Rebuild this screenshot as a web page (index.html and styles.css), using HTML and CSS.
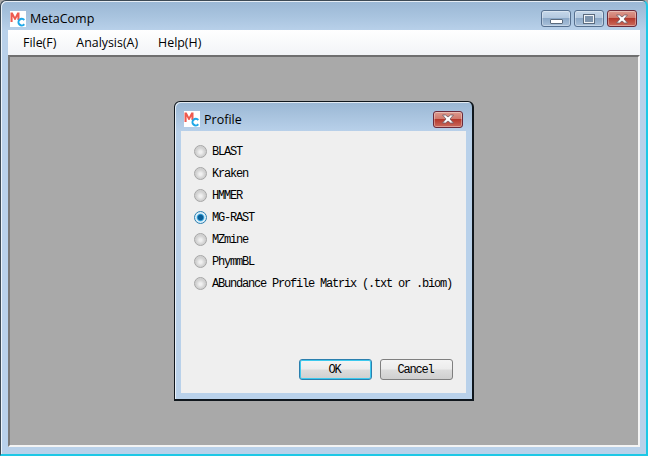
FILE: index.html
```html
<!DOCTYPE html>
<html lang="en">
<head>
<meta charset="utf-8">
<title>MetaComp</title>
<link rel="stylesheet" href="styles.css">
</head>
<body>
<div class="window">
  <header class="titlebar">
    <svg class="app-icon" width="16" height="16" viewBox="0 0 16 16"><rect width="16" height="16" fill="#fff"/><path d="M.5 11V1.500h2.200L5 6l2.300-4.500h2.200V9H7.400V5.500L5.500 9h-1L2.600 5.500V11z" fill="#ee5a50"/><path d="M15 8.300A4.300 4.300 0 1 0 15 14l-1.300-1.500a2.300 2.300 0 1 1 0-2.700z" fill="#1fa8e8"/></svg>
    <span class="title">MetaComp</span>
    <div class="controls">
      <div class="ctl ctl-min"><i class="glyph-min"></i></div>
      <div class="ctl ctl-max"><i class="glyph-max"></i></div>
      <div class="ctl ctl-close"><svg width="14" height="10" viewBox="0 0 14 10"><path d="M1.500 1h3L7 3l2.500-2h3L9 5l3.500 4h-3L7 7 4.500 9h-3L5 5z" fill="#fff" stroke="#6d5a64" stroke-width=".8"/></svg></div>
    </div>
  </header>
  <nav class="menubar">
    <span class="menu-item">File(F)</span>
    <span class="menu-item">Analysis(A)</span>
    <span class="menu-item">Help(H)</span>
  </nav>
  <main class="desktop"></main>
</div>
<section class="dialog">
  <header class="dialog-title">
    <svg class="app-icon" width="16" height="16" viewBox="0 0 16 16"><rect width="16" height="16" fill="#fff"/><path d="M.5 11V1.500h2.200L5 6l2.300-4.500h2.200V9H7.400V5.500L5.500 9h-1L2.600 5.500V11z" fill="#ee5a50"/><path d="M15 8.300A4.300 4.300 0 1 0 15 14l-1.300-1.500a2.300 2.300 0 1 1 0-2.700z" fill="#1fa8e8"/></svg>
    <span class="title">Profile</span>
    <div class="ctl ctl-close dialog-close"><svg width="14" height="10" viewBox="0 0 14 10"><path d="M1.500 1h3L7 3l2.500-2h3L9 5l3.500 4h-3L7 7 4.500 9h-3L5 5z" fill="#fff" stroke="#6d5a64" stroke-width=".8"/></svg></div>
  </header>
  <div class="dialog-body">
    <div class="radios">
      <div class="radio-row"><i class="radio"></i>BLAST</div>
      <div class="radio-row"><i class="radio"></i>Kraken</div>
      <div class="radio-row"><i class="radio"></i>HMMER</div>
      <div class="radio-row"><i class="radio on"></i>MG-RAST</div>
      <div class="radio-row"><i class="radio"></i>MZmine</div>
      <div class="radio-row"><i class="radio"></i>PhymmBL</div>
      <div class="radio-row"><i class="radio"></i>ABundance Profile Matrix (.txt or .biom)</div>
    </div>
    <div class="buttons">
      <div class="btn btn-default">OK</div>
      <div class="btn">Cancel</div>
    </div>
  </div>
</section>
</body>
</html>
```
FILE: styles.css
```css
* { box-sizing: border-box; }
html, body { margin: 0; height: 100%; }
body {
  width: 648px;
  height: 456px;
  overflow: hidden;
  background: #a9a9a9;
  font-family: "Open Sans", "Noto Sans", sans-serif;
  color: #000;
  position: relative;
}
.window {
  width: 648px;
  height: 456px;
  display: flex;
  flex-direction: column;
  padding: 0 6px 7px 7px;
  border-style: solid;
  border-width: 1px 2px 2px 1px;
  border-color: #3d4a55 #1ec8e6 #1ec8e6 #3d4a55;
  border-radius: 6px 6px 0 0;
  background: linear-gradient(to bottom, #9ab7d4 0, #a9c4df 16px, #b9d1ea 30px, #b9d1ea 100%);
  box-shadow: inset 1px 1px 0 rgba(255,255,255,.75);
}
.titlebar {
  height: 29px;
  flex: none;
  display: flex;
  align-items: center;
  padding: 6px 0 0 2px;
}
.app-icon { flex: none; display: block; }
.title { font-size: 12.500px; margin-left: 4px; }
.controls { margin-left: auto; display: flex; gap: 3px; padding-right: 3px; }
.ctl {
  height: 17px;
  width: 30px;
  border: 1px solid #56708f;
  border-radius: 3px;
  display: flex;
  align-items: center;
  justify-content: center;
  background: linear-gradient(to bottom, #c6d8ea 0, #b4c9df 45%, #8ca9c8 50%, #a9c1da 100%);
  box-shadow: inset 0 0 0 1px rgba(255,255,255,.35);
}
.ctl-close {
  border-color: #6a2a3a;
  background: linear-gradient(to bottom, #dc9a8e 0, #d0796c 45%, #b5392c 50%, #cb6a5c 100%);
}
.glyph-min {
  display: block;
  width: 13px;
  height: 5px;
  margin-top: 5px;
  border: 1px solid #5b6b7d;
  background: #fff;
  border-radius: 1px;
}
.glyph-max {
  display: block;
  width: 12px;
  height: 10px;
  border: 2px solid #f2f5f8;
  outline: 1px solid #5b6b7d;
  outline-offset: -1px;
  background: #7d94ad;
}
.menubar {
  height: 25px;
  flex: none;
  display: flex;
  align-items: center;
  gap: 20px;
  padding-left: 15px;
  background: linear-gradient(to bottom, #fff, #f2f4f7);
  font-size: 12.400px;
}
.desktop {
  flex: 1;
  background: #a9a9a9;
  border-top: 2px solid #6f6f6f;
  border-left: 2px solid #7a7a7a;
  border-right: 2px solid #f4f4f4;
  border-bottom: 2px solid #f4f4f4;
  background-clip: padding-box;
}
.dialog {
  position: absolute;
  left: 174px;
  top: 101px;
  width: 300px;
  height: 300px;
  display: flex;
  flex-direction: column;
  border-style: solid;
  border-color: #10171d;
  border-width: 1px 2px 2px 1px;
  border-radius: 6px 6px 0 0;
  background: linear-gradient(to bottom, #9ab7d4 0, #b9d1ea 30px);
  padding: 0 6px 6px;
  box-shadow: inset 1px 1px 0 rgba(255,255,255,.7);
}
.dialog-title {
  height: 29px;
  flex: none;
  display: flex;
  align-items: center;
  padding: 5px 0 0 3px;
}
.dialog-close { margin-left: auto; margin-right: 3px; }
.dialog-body {
  flex: 1;
  background: #efefef;
  display: flex;
  flex-direction: column;
  justify-content: space-between;
  padding: 10px 13px 13px 13px;
  font-family: "Liberation Mono", monospace;
  font-size: 12px;
  letter-spacing: -1.200px;
  white-space: nowrap;
}
.radios { display: flex; flex-direction: column; }
.radio-row {
  height: 22px;
  display: flex;
  align-items: center;
  gap: 5px;
}
.radio {
  width: 13px;
  height: 13px;
  margin-bottom: 2px;
  flex: none;
  border-radius: 50%;
  border: 1px solid #a6a6a6;
  background: radial-gradient(circle at 50% 55%, #f0f0f0 0 15%, #d4d4d4 50%, #cfcfcf 65%, #f4f4f4 100%);
}
.radio.on {
  border-color: #2c7fb0;
  background: radial-gradient(circle, #0c5f98 0 30%, #38a6dc 42%, #dff0fa 55%, #cfe6f4 100%);
}
.buttons { display: flex; justify-content: flex-end; gap: 8px; }
.btn {
  width: 73px;
  height: 21px;
  padding-right: 2px;
  border: 1px solid #7f7f7f;
  border-radius: 3px;
  display: flex;
  align-items: center;
  justify-content: center;
  background: linear-gradient(to bottom, #f4f4f4 0, #ececec 48%, #dcdcdc 52%, #cfcfcf 100%);
}
.btn-default {
  border-color: #2b7fae;
  box-shadow: inset 0 0 0 1px #3cc9ee;
}
```
